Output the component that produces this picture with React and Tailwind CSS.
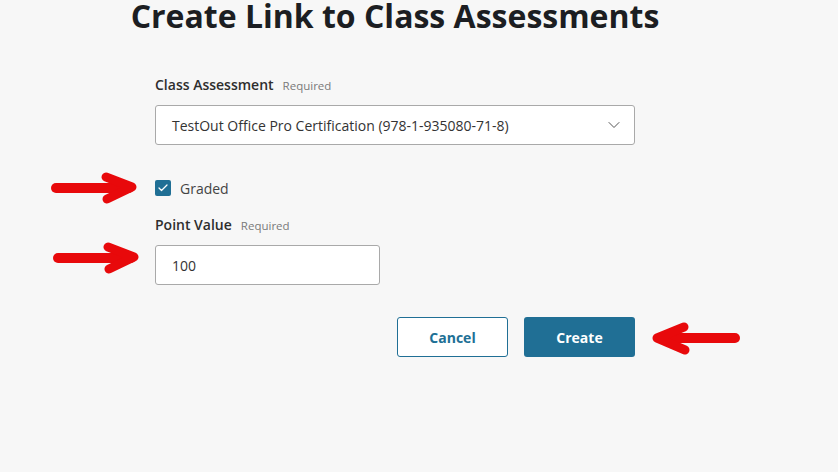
import React from "react";
import { ChevronDown, Check } from "lucide-react";

function RightArrow({ className }) {
  return (
    <svg className={className} width="92" height="36" viewBox="0 0 92 36" fill="none">
      <line x1="5" y1="18" x2="78" y2="18" stroke="#e8090b" strokeWidth="10" strokeLinecap="round" />
      <polyline points="55,7 81,17 56,29" stroke="#e8090b" strokeWidth="9" strokeLinecap="round" strokeLinejoin="round" fill="none" />
    </svg>
  );
}

function LeftArrow({ className }) {
  return (
    <svg className={className} width="96" height="36" viewBox="0 0 96 36" fill="none">
      <line x1="14" y1="18" x2="87" y2="18" stroke="#e8090b" strokeWidth="10" strokeLinecap="round" />
      <polyline points="36,7 9,18 37,30" stroke="#e8090b" strokeWidth="9" strokeLinecap="round" strokeLinejoin="round" fill="none" />
    </svg>
  );
}

export default function App() {
  return (
    <div
      className="relative w-full h-[472px] overflow-hidden bg-[#f7f7f7]"
      style={{ fontFamily: '"Open Sans", "Noto Sans", sans-serif' }}
    >
      <div className="ml-[155px] w-[480px] flex flex-col">
        <div className="-mx-[40px] flex justify-center whitespace-nowrap">
          <h1 className="text-[32px] leading-[32px] font-bold text-[#1c1e22] whitespace-nowrap">
            Create Link to Class Assessments
          </h1>
        </div>

        <div className="mt-[43px] flex items-baseline gap-[9px] h-[20px] leading-[20px]">
          <span className="text-[14px] font-semibold text-[#2e2e2e]">Class Assessment</span>
          <span className="text-[11.5px] text-[#7a7a7a]">Required</span>
        </div>

        <div className="mt-[10px] h-[40px] w-[480px] bg-white border border-[#a9a9a9] rounded-[3px] flex items-center justify-between pl-[16px] pr-[10px]">
          <span className="text-[14px] text-[#333333]">TestOut Office Pro Certification (978-1-935080-71-8)</span>
          <ChevronDown size={20} strokeWidth={1.2} color="#555555" />
        </div>

        <div className="mt-[33px] h-[20px] flex items-center gap-[9px]">
          <div className="w-[16px] h-[16px] rounded-[2px] bg-[#206f95] flex items-center justify-center">
            <Check size={12} strokeWidth={2.5} color="#ffffff" />
          </div>
          <span className="text-[14px] text-[#444444]">Graded</span>
        </div>

        <div className="mt-[17px] flex items-baseline gap-[9px] h-[20px] leading-[20px]">
          <span className="text-[14px] font-semibold text-[#2e2e2e]">Point Value</span>
          <span className="text-[11.5px] text-[#7a7a7a]">Required</span>
        </div>

        <div className="mt-[10px] h-[40px] w-[225px] bg-white border border-[#a9a9a9] rounded-[3px] flex items-center pl-[16px]">
          <span className="text-[14px] text-[#333333]">100</span>
        </div>

        <div className="mt-[32px] flex justify-end gap-[16px]">
          <button className="w-[111px] h-[40px] rounded-[3px] border border-[#206f95] bg-white text-[#206f95] text-[14px] font-bold">
            Cancel
          </button>
          <button className="w-[111px] h-[40px] rounded-[3px] bg-[#206f95] text-white text-[14px] font-bold">
            Create
          </button>
        </div>
      </div>

      <RightArrow className="absolute left-[51px] top-[170px]" />
      <RightArrow className="absolute left-[53px] top-[240px]" />
      <LeftArrow className="absolute left-[648px] top-[320px]" />
    </div>
  );
}
